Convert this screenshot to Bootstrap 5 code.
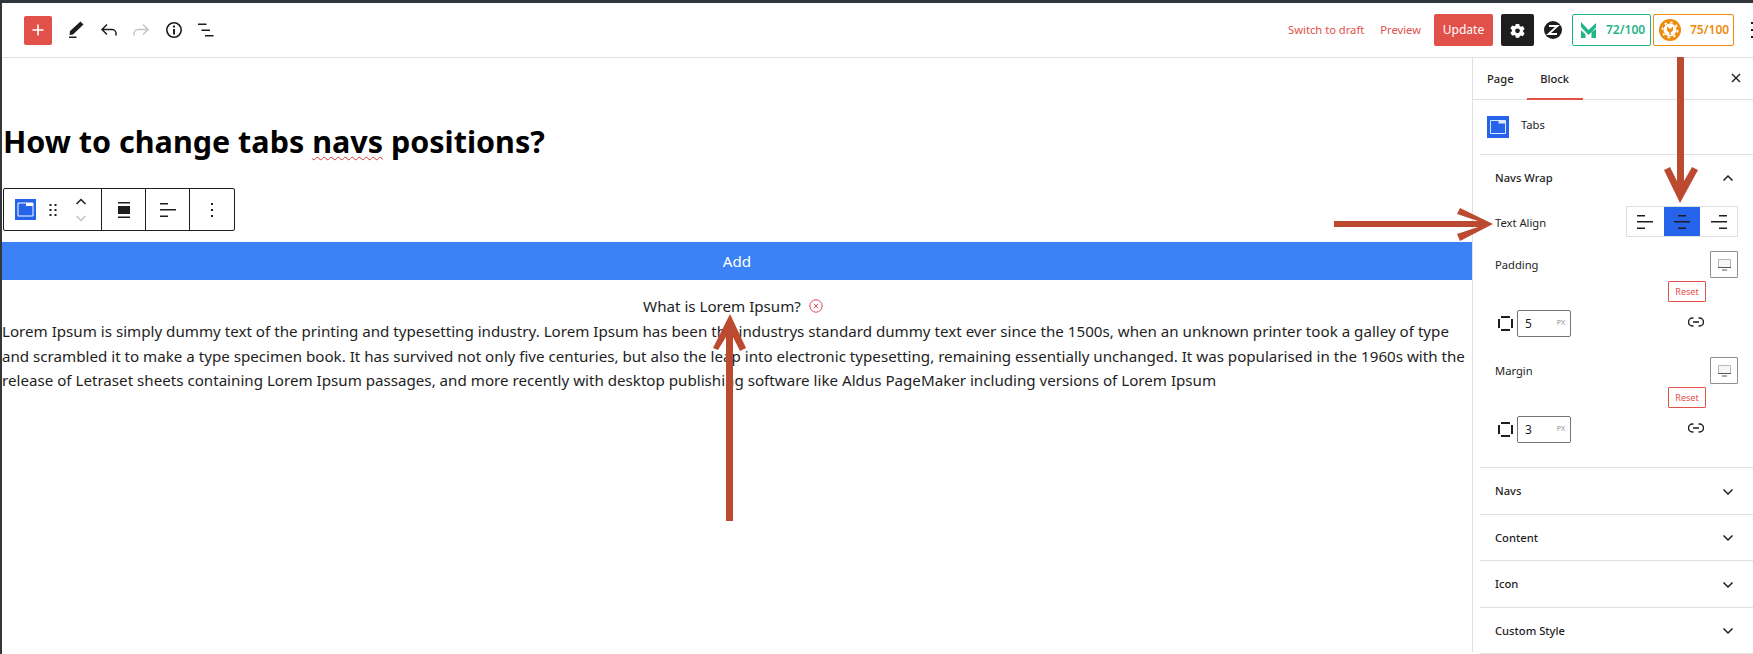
<!DOCTYPE html>
<html lang="en">
<head>
    <meta charset="UTF-8">
    <title>Edit Page</title>
    <link href="https://cdn.jsdelivr.net/npm/bootstrap@5.3.0/dist/css/bootstrap.min.css" rel="stylesheet">
    <style>
        html, body {
            height: 100%;
            overflow: hidden;
        }

        body {
            font-family: "Noto Sans", sans-serif;
            font-size: 15.15px;
            color: #1e1e1e;
            background: #fff;
            border-top: 3px solid #32373c;
            border-left: 2px solid #32373c;
            position: relative;
        }

        /* Top toolbar */
        .top-bar {
            height: 55px;
            border-bottom: 1px solid #e0e0e0;
            padding-left: 22px;
        }

        .add-btn {
            width: 28px;
            height: 29px;
            background: #e2504a;
            border-radius: 2px;
        }

        .tool-icon {
            width: 32.5px;
            height: 32px;
        }

        .top-link {
            color: #e2504a;
            font-size: 11.2px;
        }

        .update-btn {
            width: 59px;
            height: 32px;
            margin-left: 13px;
            background: #e2504a;
            color: #fff;
            font-size: 12px;
            border-radius: 2px;
        }

        .gear-btn {
            width: 33px;
            height: 32px;
            background: #1e1e1e;
            border-radius: 2px;
        }

        .logo-mark {
            margin-left: 10px;
        }

        .score-box {
            height: 32px;
            border-radius: 2px;
            font-size: 12px;
            font-weight: 600;
            background: #fff;
        }

        .score-green {
            width: 79px;
            margin-left: 10px;
            color: #1fb587;
            border: 1px solid #1fb587;
            padding-left: 8px;
            gap: 10px;
        }

        .score-orange {
            width: 81px;
            margin-left: 2px;
            color: #f08a0c;
            border: 1px solid #f08a0c;
            padding-left: 5px;
            gap: 9px;
        }

        .more-dots {
            margin-left: 17px;
        }

        /* Editor */
        .editor-area {
            width: 1470px;
            height: 594px;
        }

        .post-title {
            font-size: 30.5px;
            font-weight: 700;
            line-height: 44px;
            margin: 0;
            padding: 61px 0 0 1px;
            color: #000;
        }

        .spell-word {
            text-decoration: underline wavy #d63638 1px;
            text-underline-offset: 3px;
        }

        .block-bar {
            width: 232px;
            height: 43px;
            margin: 25px 0 11px 1px;
            border: 1px solid #1e1e1e;
            border-radius: 2px;
        }

        .block-group {
            border-right: 1px solid #1e1e1e;
            height: 100%;
            width: 44px;
        }

        .block-group-main {
            width: 98px;
            padding-left: 11px;
        }

        .drag-handle {
            margin-left: 12px;
        }

        .mover-icon {
            margin-left: 17px;
        }

        .add-bar {
            height: 38px;
            background: #3b82f6;
            color: #fff;
        }

        .tab-title {
            height: 26px;
            margin-top: 13px;
            padding-right: 8px;
        }

        .tab-body {
            line-height: 24.5px;
            margin: 0;
        }

        /* Sidebar */
        .side-panel {
            width: 281px;
            height: 594px;
            border-left: 1px solid #e0e0e0;
            font-size: 11.2px;
        }

        .side-tabs {
            height: 42px;
            border-bottom: 1px solid #e0e0e0;
            padding-left: 14px;
        }

        .side-tab {
            height: 42px;
            line-height: 42px;
            font-weight: 500;
        }

        .side-tab-on {
            width: 56px;
            margin-left: 13px;
            text-align: center;
            border-bottom: 2px solid #e2504a;
        }

        .side-close {
            margin: 14px 11px 0 auto;
        }

        .block-card {
            height: 55px;
            margin-left: 7px;
            padding-left: 7px;
            border-bottom: 1px solid #e0e0e0;
        }

        .panel-section {
            margin-left: 7px;
            padding: 0 15px;
            border-bottom: 1px solid #e0e0e0;
        }

        .panel-closed {
            height: 46.5px;
            padding-top: 2px;
            font-weight: 500;
        }

        .panel-head {
            height: 46px;
            font-weight: 500;
        }

        .panel-open {
            height: 313px;
        }

        .side-label {
            padding-top: 3px;
        }

        .side-label-low {
            padding-top: 1px;
        }

        .align-row {
            height: 31px;
            margin-top: 5px;
        }

        .align-group {
            width: 112px;
            height: 31px;
            border: 1px solid #e0e0e0;
        }

        .align-cell {
            height: 100%;
            flex: 1;
        }

        .align-on {
            background: #2563eb;
        }

        .device-row {
            height: 27px;
            margin-top: 20px;
        }

        .device-row-first {
            margin-top: 14px;
        }

        .device-btn {
            width: 28px;
            height: 27px;
            border: 1px solid #8c8f94;
            border-radius: 1px;
        }

        .reset-row {
            margin-top: 3px;
            padding-right: 32px;
        }

        .reset-btn {
            width: 38px;
            height: 21px;
            border: 1px solid #e2504a;
            border-radius: 1px;
            color: #e2504a;
            font-size: 9px;
        }

        .input-row {
            height: 27px;
            margin-top: 8px;
            padding-left: 3px;
        }

        .unit-input {
            width: 54px;
            height: 27px;
            border: 1px solid #757575;
            border-radius: 2px;
            padding: 0 5px 0 7px;
            font-size: 12px;
        }

        .unit-label {
            font-size: 7px;
            color: #8c8f94;
        }

        .link-icon {
            margin: 0 0 4px 117px;
        }

        /* Annotation arrows painted over the screenshot */
        .arrow-layer {
            position: absolute;
            top: -3px;
            left: -2px;
            width: 1753px;
            height: 654px;
            pointer-events: none;
        }
    </style>
</head>
<body>

    <div class="top-bar d-flex align-items-center">
        <div class="add-btn d-flex align-items-center justify-content-center">
            <svg width="14" height="14" viewBox="0 0 14 14"><path d="M7 1.500v11M1.500 7h11" stroke="#fff" stroke-width="1.600"/></svg>
        </div>
        <div class="d-flex align-items-center ms-2">
            <span class="tool-icon d-flex align-items-center justify-content-center">
                <svg width="24" height="24" viewBox="0 0 24 24"><path d="M6 13 16.500 3.500l3 3L9 16.500l-3.500.5zM5 18.500h7.500V20H5z" fill="#1e1e1e"/></svg>
            </span>
            <span class="tool-icon d-flex align-items-center justify-content-center">
                <svg width="24" height="24" viewBox="0 0 24 24"><path d="M10 6.500 5 11.500l5 5M5.500 11.500H15a4 4 0 0 1 4 4v2" fill="none" stroke="#1e1e1e" stroke-width="1.500"/></svg>
            </span>
            <span class="tool-icon d-flex align-items-center justify-content-center">
                <svg width="24" height="24" viewBox="0 0 24 24"><path d="M14 6.500l5 5-5 5M18.500 11.500H9a4 4 0 0 0-4 4v2" fill="none" stroke="#c4c4c4" stroke-width="1.500"/></svg>
            </span>
            <span class="tool-icon d-flex align-items-center justify-content-center">
                <svg width="24" height="24" viewBox="0 0 24 24"><circle cx="12" cy="12" r="7.200" fill="none" stroke="#1e1e1e" stroke-width="1.600"/><path d="M11 11h2v5.500h-2zM11 7.500h2v2h-2z" fill="#1e1e1e"/></svg>
            </span>
            <span class="tool-icon d-flex align-items-center justify-content-center">
                <svg width="24" height="24" viewBox="0 0 24 24"><path d="M4 5.500h8.500v1.600H4zM7.500 11.500H16v1.600H7.500zM11 17h8.500v1.600H11z" fill="#1e1e1e"/></svg>
            </span>
        </div>

        <div class="ms-auto d-flex align-items-center">
            <span class="top-link">Switch to draft</span>
            <span class="top-link ms-3">Preview</span>
            <span class="update-btn d-flex align-items-center justify-content-center">Update</span>
            <span class="gear-btn d-flex align-items-center justify-content-center ms-2">
                <svg width="15" height="15" viewBox="0 0 24 24"><path fill="#fff" fill-rule="evenodd" d="M9 1h6l.8 3.600 2.300 1.300 3.500-1.100 3 5.200-2.700 2.500v2.600l2.700 2.500-3 5.200-3.500-1.100-2.300 1.300L15 25.600H9l-.8-3.600-2.300-1.300-3.500 1.100-3-5.200 2.700-2.500v-2.600L-.6 9l3-5.200 3.500 1.100 2.300-1.300zM12 9a4 4 0 1 0 0 8.500A4 4 0 0 0 12 9z" transform="translate(1.200 .6) scale(.9)"/></svg>
            </span>
            <span class="logo-mark d-flex">
                <svg width="18" height="18" viewBox="0 0 18 18"><circle cx="9" cy="9" r="9" fill="#1e1e1e"/><path d="M5 5h8.500L4.500 13H13" fill="none" stroke="#fff" stroke-width="1.800"/></svg>
            </span>
            <span class="score-box score-green d-flex align-items-center">
                <svg width="15" height="16" viewBox="0 0 15 16"><path d="M0 0l7.500 8L15 1v4.500L7.500 13 0 5zM0 8l4.500 4.500V16H0zM10.500 10l4.500-3v9h-4.500z" fill="#1fb587"/></svg>
                72/100
            </span>
            <span class="score-box score-orange d-flex align-items-center">
                <svg width="22" height="22" viewBox="0 0 22 22"><circle cx="11" cy="11" r="11" fill="#f08a0c"/><circle cx="11" cy="11" r="6.500" fill="#fff"/><circle cx="11" cy="11" r="7.600" fill="none" stroke="#fff" stroke-width="1.800" stroke-dasharray="2.400 3.570"/><path d="M8 8h1.300v1.500h3.400V8H14v3.500l-2.300 2V16h-1.400v-2.500L8 11.500z" fill="#f08a0c"/></svg>
                75/100
            </span>
            <svg class="more-dots" width="2" height="16" viewBox="0 0 2 16"><path d="M0 0h2v2H0zM0 7h2v2H0zM0 14h2v2H0z" fill="#1e1e1e"/></svg>
        </div>
    </div>

    <div class="d-flex">
        <div class="editor-area">
            <h1 class="post-title">How to change tabs <span class="spell-word">navs</span> positions?</h1>

            <div class="block-bar d-flex align-items-center">
                <div class="block-group block-group-main d-flex align-items-center">
                    <svg width="21" height="21" viewBox="0 0 21 21"><rect width="21" height="21" fill="#2563eb"/><path d="M3 4h15v13H3z" fill="none" stroke="#fff"/><path d="M11 4h7v3h-7z" fill="#fff"/></svg>
                    <svg class="drag-handle" width="10" height="14" viewBox="0 0 10 14"><path d="M1.500 1h2v2h-2zM6.500 1h2v2h-2zM1.500 6h2v2h-2zM6.500 6h2v2h-2zM1.500 11h2v2h-2zM6.500 11h2v2h-2z" fill="#1e1e1e"/></svg>
                    <svg class="mover-icon" width="12" height="26" viewBox="0 0 12 26"><path d="M1.500 7 6 2.500 10.500 7" fill="none" stroke="#1e1e1e" stroke-width="1.500"/><path d="M1.500 19 6 23.500 10.500 19" fill="none" stroke="#c4c4c4" stroke-width="1.500"/></svg>
                </div>
                <div class="block-group d-flex align-items-center justify-content-center">
                    <svg width="14" height="16" viewBox="0 0 14 16"><path d="M1 0h12v1.500H1zM1 4h12v8H1zM1 14.500h12V16H1z" fill="#1e1e1e"/></svg>
                </div>
                <div class="block-group d-flex align-items-center justify-content-center">
                    <svg width="16" height="14" viewBox="0 0 16 14"><path d="M0 0h8v1.500H0zM0 6h16v1.500H0zM0 12.500h8V14H0z" fill="#1e1e1e"/></svg>
                </div>
                <div class="d-flex align-items-center justify-content-center flex-grow-1">
                    <svg width="4" height="14" viewBox="0 0 4 14"><path d="M1 0h2v2H1zM1 6h2v2H1zM1 12h2v2H1z" fill="#1e1e1e"/></svg>
                </div>
            </div>

            <div class="add-bar d-flex align-items-center justify-content-center">Add</div>

            <div class="tab-title d-flex align-items-center justify-content-center">
                What is Lorem Ipsum?
                <svg width="14" height="14" viewBox="0 0 14 14" class="ms-2"><circle cx="7" cy="7" r="6.200" fill="none" stroke="#e0455a"/><path d="M4.800 4.800l4.400 4.400M9.200 4.800l-4.400 4.400" stroke="#e0455a"/></svg>
            </div>
            <p class="tab-body">Lorem Ipsum is simply dummy text of the printing and typesetting industry. Lorem Ipsum has been the industrys standard dummy text ever since the 1500s, when an unknown printer took a galley of type and scrambled it to make a type specimen book. It has survived not only five centuries, but also the leap into electronic typesetting, remaining essentially unchanged. It was popularised in the 1960s with the release of Letraset sheets containing Lorem Ipsum passages, and more recently with desktop publishing software like Aldus PageMaker including versions of Lorem Ipsum</p>
        </div>

        <div class="side-panel">
            <div class="side-tabs d-flex align-items-start">
                <span class="side-tab">Page</span>
                <span class="side-tab side-tab-on">Block</span>
                <svg class="side-close" width="12" height="12" viewBox="0 0 12 12"><path d="M2 2l8 8M10 2l-8 8" stroke="#1e1e1e" stroke-width="1.400"/></svg>
            </div>

            <div class="block-card d-flex align-items-center">
                <svg width="22" height="22" viewBox="0 0 22 22"><rect width="22" height="22" fill="#2563eb"/><path d="M3.500 4.500h15v13h-15z" fill="none" stroke="#dbe6ff"/><path d="M11.500 4.500h7v3h-7z" fill="#dbe6ff"/></svg>
                <span class="ms-2 ps-1 mb-1">Tabs</span>
            </div>

            <div class="panel-section panel-open">
                <div class="panel-head d-flex align-items-center justify-content-between">
                    Navs Wrap
                    <svg width="12" height="8" viewBox="0 0 12 8" class="me-1"><path d="M1.500 6.500 6 2l4.500 4.500" fill="none" stroke="#1e1e1e" stroke-width="1.500"/></svg>
                </div>
                <div class="align-row d-flex align-items-center justify-content-between">
                    <span class="side-label">Text Align</span>
                    <div class="align-group d-flex">
                        <div class="align-cell d-flex align-items-center justify-content-center">
                            <svg width="16" height="14" viewBox="0 0 16 14"><path d="M0 0h8v1.500H0zM0 6h16v1.500H0zM0 12.500h8V14H0z" fill="#1e1e1e"/></svg>
                        </div>
                        <div class="align-cell align-on d-flex align-items-center justify-content-center">
                            <svg width="16" height="14" viewBox="0 0 16 14"><path d="M4 0h8v1.500H4zM0 6h16v1.500H0zM4 12.500h8V14H4z" fill="#1e1e1e"/></svg>
                        </div>
                        <div class="align-cell d-flex align-items-center justify-content-center">
                            <svg width="16" height="14" viewBox="0 0 16 14"><path d="M8 0h8v1.500H8zM0 6h16v1.500H0zM8 12.500h8V14H8z" fill="#1e1e1e"/></svg>
                        </div>
                    </div>
                </div>

                <div class="device-row device-row-first d-flex align-items-center justify-content-between">
                    <span class="side-label-low">Padding</span>
                    <span class="device-btn d-flex align-items-center justify-content-center">
                        <svg width="13" height="12" viewBox="0 0 13 12"><path d="M.5.5h12v8H.5z" fill="#f6f6f6" stroke="#b4b7bb"/><path d="M0 8.500h13M4 11h5" stroke="#555"/></svg>
                    </span>
                </div>
                <div class="reset-row d-flex justify-content-end">
                    <span class="reset-btn d-flex align-items-center justify-content-center">Reset</span>
                </div>
                <div class="input-row d-flex align-items-center">
                    <svg width="15" height="15" viewBox="0 0 15 15"><path d="M3 1h9M3 14h9M1 3v9M14 3v9" stroke="#1e1e1e" stroke-width="2"/></svg>
                    <span class="unit-input d-flex align-items-center justify-content-between ms-1">5 <span class="unit-label">PX</span></span>
                    <svg class="link-icon" width="16" height="10" viewBox="0 0 16 10"><path d="M5.500 1H4.500a4 4 0 0 0 0 8h1M10.500 1h1a4 4 0 0 1 0 8h-1M5 5h6" fill="none" stroke="#1e1e1e" stroke-width="1.400"/></svg>
                </div>

                <div class="device-row d-flex align-items-center justify-content-between">
                    <span class="side-label-low">Margin</span>
                    <span class="device-btn d-flex align-items-center justify-content-center">
                        <svg width="13" height="12" viewBox="0 0 13 12"><path d="M.5.5h12v8H.5z" fill="#f6f6f6" stroke="#b4b7bb"/><path d="M0 8.500h13M4 11h5" stroke="#555"/></svg>
                    </span>
                </div>
                <div class="reset-row d-flex justify-content-end">
                    <span class="reset-btn d-flex align-items-center justify-content-center">Reset</span>
                </div>
                <div class="input-row d-flex align-items-center">
                    <svg width="15" height="15" viewBox="0 0 15 15"><path d="M3 1h9M3 14h9M1 3v9M14 3v9" stroke="#1e1e1e" stroke-width="2"/></svg>
                    <span class="unit-input d-flex align-items-center justify-content-between ms-1">3 <span class="unit-label">PX</span></span>
                    <svg class="link-icon" width="16" height="10" viewBox="0 0 16 10"><path d="M5.500 1H4.500a4 4 0 0 0 0 8h1M10.500 1h1a4 4 0 0 1 0 8h-1M5 5h6" fill="none" stroke="#1e1e1e" stroke-width="1.400"/></svg>
                </div>
            </div>

            <div class="panel-section panel-closed d-flex align-items-center justify-content-between">
                Navs
                <svg width="12" height="8" viewBox="0 0 12 8" class="me-1"><path d="M1.500 1.500 6 6l4.500-4.500" fill="none" stroke="#1e1e1e" stroke-width="1.500"/></svg>
            </div>
            <div class="panel-section panel-closed d-flex align-items-center justify-content-between">
                Content
                <svg width="12" height="8" viewBox="0 0 12 8" class="me-1"><path d="M1.500 1.500 6 6l4.500-4.500" fill="none" stroke="#1e1e1e" stroke-width="1.500"/></svg>
            </div>
            <div class="panel-section panel-closed d-flex align-items-center justify-content-between">
                Icon
                <svg width="12" height="8" viewBox="0 0 12 8" class="me-1"><path d="M1.500 1.500 6 6l4.500-4.500" fill="none" stroke="#1e1e1e" stroke-width="1.500"/></svg>
            </div>
            <div class="panel-section panel-closed d-flex align-items-center justify-content-between">
                Custom Style
                <svg width="12" height="8" viewBox="0 0 12 8" class="me-1"><path d="M1.500 1.500 6 6l4.500-4.500" fill="none" stroke="#1e1e1e" stroke-width="1.500"/></svg>
            </div>
        </div>
    </div>

    <!-- annotation arrows and the red marks on the left edge -->
    <svg class="arrow-layer" viewBox="0 0 1753 654">
        <path fill="#e2504a" d="M0 177h2v10H0zM0 197h2v12H0z"/>
        <path fill="#bb4a30" d="M1677 57h7v124l8-14 6 3-18 33-16-33 6-3 7 14z"/>
        <path fill="#bb4a30" d="M1334 221h144l-21-7 3-6 33 16-33 17-3-7 21-7H1334z"/>
        <path fill="#bb4a30" d="M726 521V337l-8 13-5-2 17-34 16 34-6 3-7-14v184z"/>
    </svg>

</body>
</html>
